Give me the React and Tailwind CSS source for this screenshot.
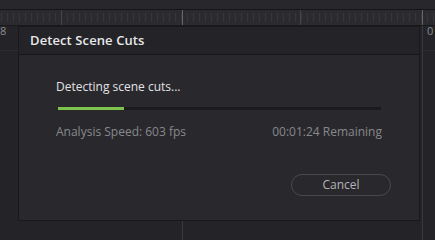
import React from "react";

function Ruler() {
  const ticks = [];
  for (let x = 1; x < 435; x += 6) {
    ticks.push(x);
  }
  return (
    <svg width="435" height="15" className="block">
      {ticks.map((x) => (
        <line key={x} x1={x + 0.5} y1="3" x2={x + 0.5} y2="12" stroke="#36363b" strokeWidth="1" />
      ))}
      <line x1="61.5" y1="0" x2="61.5" y2="15" stroke="#45454b" />
      <line x1="300.5" y1="0" x2="300.5" y2="15" stroke="#45454b" />
      <line x1="182.5" y1="0" x2="182.5" y2="15" stroke="#65656b" />
      <line x1="422.5" y1="0" x2="422.5" y2="15" stroke="#65656b" />
    </svg>
  );
}

export default function App() {
  return (
    <div
      className="relative w-[435px] h-[240px] overflow-hidden bg-[#242428]"
      style={{ fontFamily: '"Open Sans", "Noto Sans", sans-serif' }}
    >
      {/* top strip */}
      <div className="h-[9px] bg-[#28282c]" />
      <div className="h-px bg-[#161619]" />
      <div className="h-[15px] bg-[#2a2a2f]">
        <Ruler />
      </div>
      <div className="h-px bg-[#19191c]" />
      <div className="relative h-[214px]">
        <div className="absolute left-0 top-[-2px] text-[11px] text-[#8a8a8e] leading-[14px]">8</div>
        <div className="absolute left-[188px] top-[-1px] text-[11px] text-[#8a8a8e] leading-[14px]">01:00:04:00</div>
        <div className="absolute left-[427px] top-[-2px] text-[11px] text-[#8a8a8e] leading-[14px] whitespace-nowrap">0</div>
        <div className="absolute left-[182px] top-0 bottom-0 w-px bg-[#38383d]" />
        <div className="absolute left-[422px] top-0 bottom-0 w-px bg-[#38383d]" />
        <div className="absolute left-0 right-0 top-[24px] h-px bg-[#2c2c30]" />
      </div>

      {/* dialog */}
      <div className="absolute left-[18px] top-[26px] w-[402px] h-[195px] border border-[#19191c] bg-[#29282d] flex flex-col">
        <div className="h-[28px] bg-[#242328] flex items-center pl-[11px] border-b border-[#161619]">
          <span className="text-[13px] font-semibold text-[#e8e8ea] tracking-[0.1px]">Detect Scene Cuts</span>
        </div>
        <div className="flex-1 flex flex-col px-[37px] pt-[23px]">
          <div className="text-[12px] text-[#e2e2e4] leading-[18px]">Detecting scene cuts...</div>
          <div className="mt-[11px] ml-[2px] mr-[1px] h-[3px] bg-[#1b1b1e] flex">
            <div className="w-[66px] h-full bg-[#7cc24c]" />
          </div>
          <div className="mt-[13px] flex justify-between text-[12px] text-[#88888c] leading-[18px]">
            <span>Analysis Speed: 603 fps</span>
            <span>00:01:24 Remaining</span>
          </div>
          <div className="mt-[33px] flex justify-end mr-[-9px]">
            <button className="w-[100px] h-[22px] rounded-full border border-[#48484d] text-[12px] text-[#b4b4b8] leading-none">
              Cancel
            </button>
          </div>
        </div>
      </div>
    </div>
  );
}
